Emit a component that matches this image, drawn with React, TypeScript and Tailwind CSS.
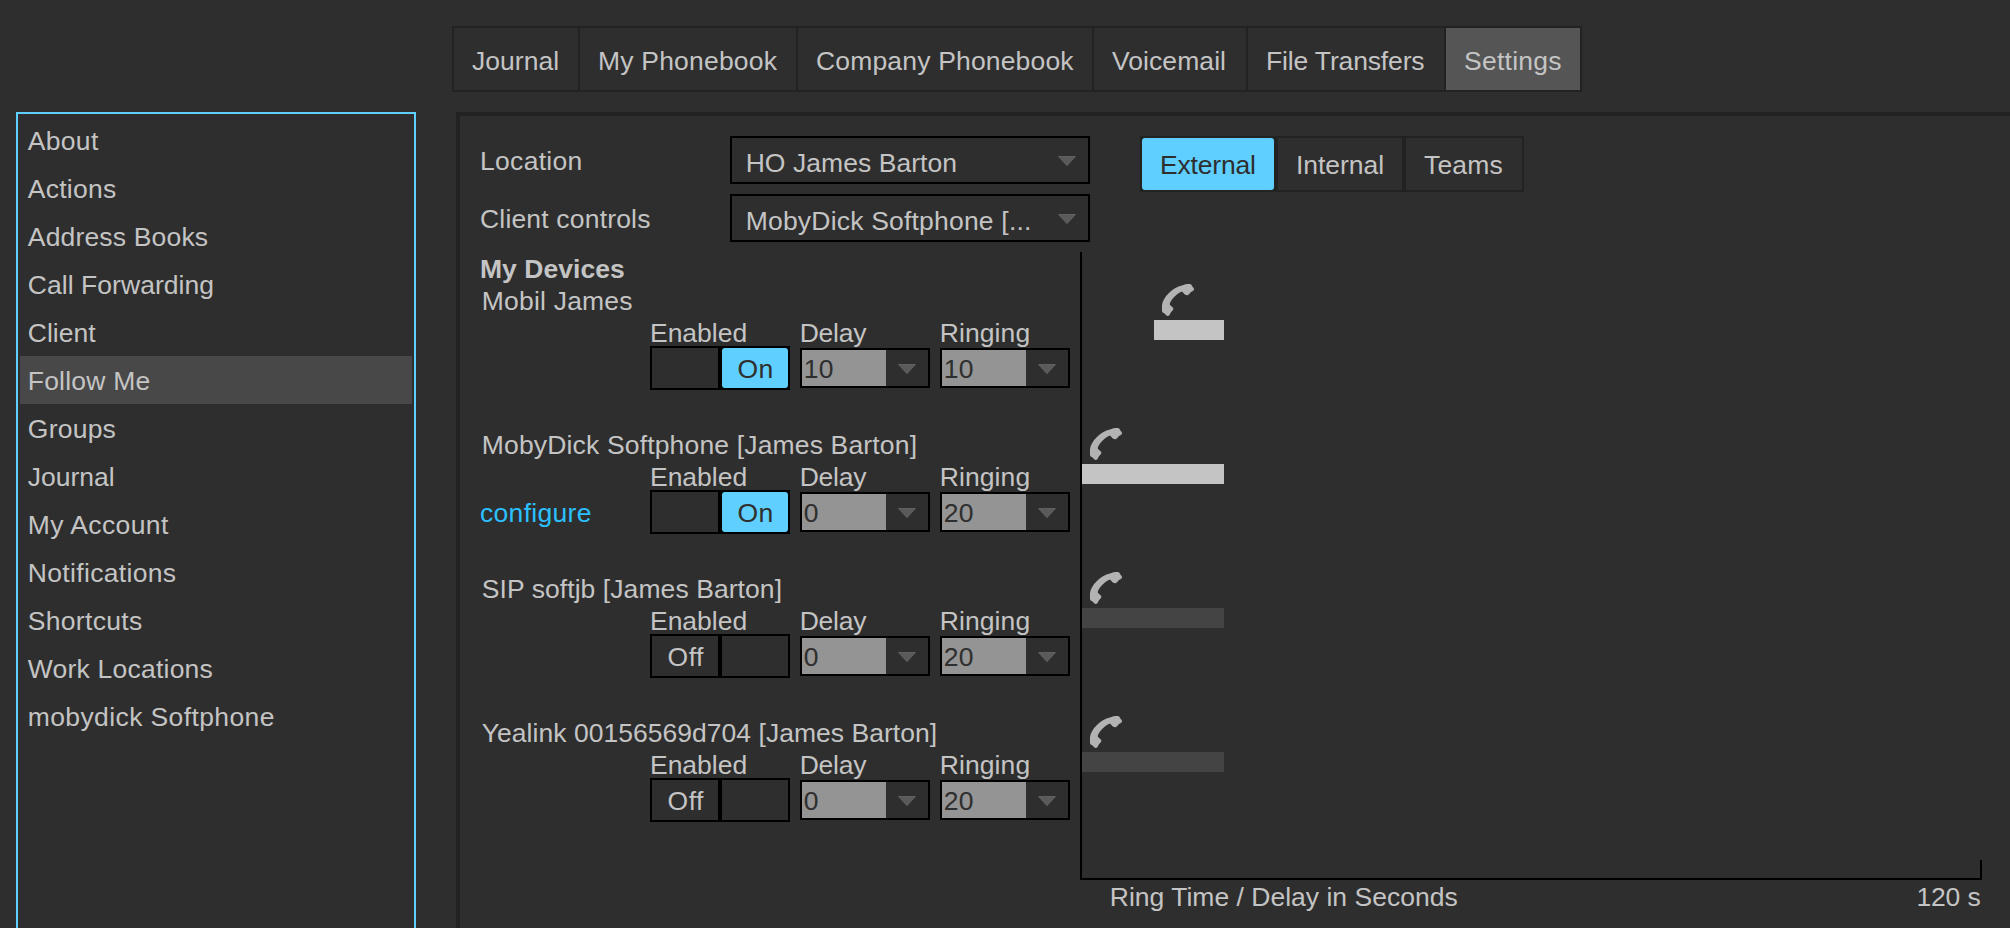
type Label = { text: string; tracking: string };

const MENU: Label[] = [
  { text: "About", tracking: "tracking-[0.3px]" },
  { text: "Actions", tracking: "tracking-[0.24px]" },
  { text: "Address Books", tracking: "tracking-[0.17px]" },
  { text: "Call Forwarding", tracking: "tracking-[0.05px]" },
  { text: "Client", tracking: "tracking-[0.02px]" },
  { text: "Follow Me", tracking: "tracking-[0.2px]" },
  { text: "Groups", tracking: "tracking-[0.23px]" },
  { text: "Journal", tracking: "tracking-[-0.02px]" },
  { text: "My Account", tracking: "tracking-[0.4px]" },
  { text: "Notifications", tracking: "tracking-[0.33px]" },
  { text: "Shortcuts", tracking: "tracking-[0.3px]" },
  { text: "Work Locations", tracking: "tracking-[0.22px]" },
  { text: "mobydick Softphone", tracking: "tracking-[0.38px]" },
];

const TABS: (Label & { width: string })[] = [
  { text: "Journal", width: "w-[124px]", tracking: "tracking-[0.02px]" },
  { text: "My Phonebook", width: "w-[216px]", tracking: "tracking-[0.2px]" },
  { text: "Company Phonebook", width: "w-[294px]", tracking: "tracking-[0.17px]" },
  { text: "Voicemail", width: "w-[152px]", tracking: "tracking-[0.07px]" },
  { text: "File Transfers", width: "w-[196px]", tracking: "tracking-[-0.15px]" },
  { text: "Settings", width: "w-[134px]", tracking: "tracking-[0.25px]" },
];

const SEGMENTS: (Label & { width: string })[] = [
  { text: "External", width: "w-[132px]", tracking: "tracking-[-0.18px]" },
  { text: "Internal", width: "w-[124px]", tracking: "tracking-[-0.05px]" },
  { text: "Teams", width: "w-[116px]", tracking: "tracking-[0.19px]" },
];

type Device = Label & { on: boolean; delay: number; ringing: number; configurable?: boolean };

const DEVICES: Device[] = [
  { text: "Mobil James", tracking: "tracking-[0.2px]", on: true, delay: 10, ringing: 10 },
  { text: "MobyDick Softphone [James Barton]", tracking: "tracking-[0.16px]", on: true, delay: 0, ringing: 20, configurable: true },
  { text: "SIP softjb [James Barton]", tracking: "tracking-[0.07px]", on: false, delay: 0, ringing: 20 },
  { text: "Yealink 00156569d704 [James Barton]", tracking: "tracking-[0.03px]", on: false, delay: 0, ringing: 20 },
];

const PX_PER_SECOND = 7.2;

function Arrow() {
  return (
    <svg className="h-[10px] w-[18px] shrink-0" viewBox="0 0 18 10">
      <path d="M0.5 0.5H17.5L9 9.7Z" fill="#5a5a5a" stroke="#727272" strokeWidth="0.6" />
    </svg>
  );
}

function Handset() {
  return (
    <svg className="block h-8 w-8" viewBox="0 0 32 32">
      <path
        d="M0 21C0.8 13.5 10.5 3.2 20 1.4C22 1 23.5 0 25 0H28C29.2 0 29.6 1.4 30.4 2.4C31.2 3.4 32 3.8 32 5.2C32 6.8 30.4 7 29 8C27.6 9 27 11 25.4 11.2C23.8 11.3 22.6 10.4 21.6 9.2C21 8.4 20.8 7.2 19.2 7.8C14.6 9.8 9.6 15 7.8 19.4C7.5 20.4 8.4 21.2 9.2 22C10.2 23 11.6 23.8 11.4 25C11.2 26.4 9.2 27.6 8.4 29.2C7.8 30.6 7.2 32 5.8 32C4.4 32 3.6 30.6 2.4 29.6C1.2 28.8 0 28.2 0 27Z"
        fill="#b3b3b3"
      />
    </svg>
  );
}

function Select({ text, tracking }: Label) {
  return (
    <div className="flex h-12 w-[360px] items-center justify-between border-2 border-black pr-3 pl-[13.7px]">
      <span className={`h-11 leading-[50px] ${tracking}`}>{text}</span>
      <div className="pt-[2px]">
        <div className="flex">
          <Arrow />
        </div>
      </div>
    </div>
  );
}

function NumberSelect({ label, value, tracking }: { label: string; value: number; tracking: string }) {
  return (
    <div className="w-[130px]">
      <div className={`-ml-[0.3px] h-[31px] leading-8 ${tracking}`}>{label}</div>
      <div className="flex h-10 border-2 border-black">
        <div className="w-[84px] bg-[#949494] pl-[1.8px] leading-[38px] tracking-[0.1px] text-[#2e2e2e]">{value}</div>
        <div className="flex flex-1 justify-center pt-[14px]">
          <Arrow />
        </div>
      </div>
    </div>
  );
}

function Toggle({ on }: { on: boolean }) {
  return (
    <div className="w-[140px]">
      <div className="h-[29px] leading-8 tracking-[-0.02px]">Enabled</div>
      <div className="flex h-11 gap-1 border-2 border-black bg-black leading-[42px]">
        <div className="w-[66px] bg-[#2e2e2e] pl-[15.6px] tracking-[0.5px]">{on ? "" : "Off"}</div>
        {on ? (
          <div className="w-[66px] rounded-[3px] bg-[#5fcfff] pl-[15.4px] tracking-[0.5px] text-[#2e2e2e]">On</div>
        ) : (
          <div className="w-[66px] bg-[#2e2e2e]" />
        )}
      </div>
    </div>
  );
}

function DeviceRow({ device }: { device: Device }) {
  return (
    <div className="h-36">
      <div className={`h-8 pl-[1.8px] whitespace-nowrap ${device.tracking}`}>{device.text}</div>
      <div className="flex">
        <div className="w-[170px] pt-9">
          {device.configurable && <a className="tracking-[0.3px] text-[#2bc0ff]">configure</a>}
        </div>
        <div className="flex gap-2.5">
          <Toggle on={device.on} />
          <NumberSelect label="Delay" value={device.delay} tracking="tracking-[-0.25px]" />
          <NumberSelect label="Ringing" value={device.ringing} tracking="tracking-[0.1px]" />
        </div>
      </div>
    </div>
  );
}

function Timeline() {
  return (
    <div className="w-[902px]">
      <div className="relative h-[628px] border-b-2 border-l-2 border-black pt-8">
        {DEVICES.map((d) => (
          <div key={d.text} className="h-36">
            <div style={{ marginLeft: d.delay * PX_PER_SECOND }}>
              <div className="mb-1 ml-2">
                <Handset />
              </div>
              <div
                className={`h-5 ${d.on ? "bg-[#c4c4c4]" : "bg-[#444444]"}`}
                style={{ width: d.ringing * PX_PER_SECOND - 2 }}
              />
            </div>
          </div>
        ))}
        <div className="absolute right-0 bottom-0 h-[18px] w-0.5 bg-black" />
      </div>
      <div className="flex justify-between pt-px pr-[1.5px] pl-[29.8px]">
        <span className="tracking-[0.01px]">Ring Time / Delay in Seconds</span>
        <span className="tracking-[-0.15px]">120 s</span>
      </div>
    </div>
  );
}

export default function App() {
  return (
    <div className="flex h-[928px] w-[2010px] flex-col overflow-hidden bg-[#2e2e2e] font-['Liberation_Sans',Arial,sans-serif] text-[26.5px] leading-8 text-[#c4c4c4]">
      <nav className="mt-[26px] ml-[452px] flex h-[66px] shrink-0 gap-0.5 self-start bg-[#222222] p-0.5">
        {TABS.map((t) => (
          <div
            key={t.text}
            className={`h-[62px] pl-[18px] leading-[66px] whitespace-nowrap ${t.width} ${t.tracking} ${t.text === "Settings" ? "bg-[#555555]" : "bg-[#2e2e2e]"}`}
          >
            {t.text}
          </div>
        ))}
      </nav>

      <div className="mt-5 flex min-h-0 flex-1">
        <aside className="ml-4 w-[400px] shrink-0 border-2 border-b-0 border-[#5fcfff] p-0.5">
          {MENU.map((m) => (
            <div
              key={m.text}
              className={`h-12 pl-[7.8px] leading-[50px] ${m.tracking} ${m.text === "Follow Me" ? "bg-[#484848]" : ""}`}
            >
              {m.text}
            </div>
          ))}
        </aside>

        <main className="ml-10 min-w-0 flex-1 border-t-4 border-l-4 border-[#222222] pt-5 pl-5">
          <div className="flex h-[106px] items-start">
            <div className="flex flex-col gap-2.5">
              <div className="flex h-12">
                <span className="w-[250px] leading-[50px] tracking-[0.3px]">Location</span>
                <Select text="HO James Barton" tracking="tracking-[0.05px]" />
              </div>
              <div className="flex h-12">
                <span className="w-[250px] leading-[50px] tracking-[0.18px]">Client controls</span>
                <Select text="MobyDick Softphone [..." tracking="tracking-[0.2px]" />
              </div>
            </div>
            <div className="ml-[50px] flex h-14 gap-1 bg-[#222222] p-0.5">
              {SEGMENTS.map((s) => (
                <div
                  key={s.text}
                  className={`h-[52px] pl-[18px] leading-[54px] ${s.width} ${s.tracking} ${s.text === "External" ? "rounded-[3px] bg-[#5fcfff] text-[#2e2e2e]" : "bg-[#2e2e2e]"}`}
                >
                  {s.text}
                </div>
              ))}
            </div>
          </div>

          <div className="mt-2.5 flex">
            <div className="w-[600px] pt-px">
              <h2 className="font-bold tracking-[0.05px]">My Devices</h2>
              {DEVICES.map((d) => (
                <DeviceRow key={d.text} device={d} />
              ))}
            </div>
            <Timeline />
          </div>
        </main>
      </div>
    </div>
  );
}
